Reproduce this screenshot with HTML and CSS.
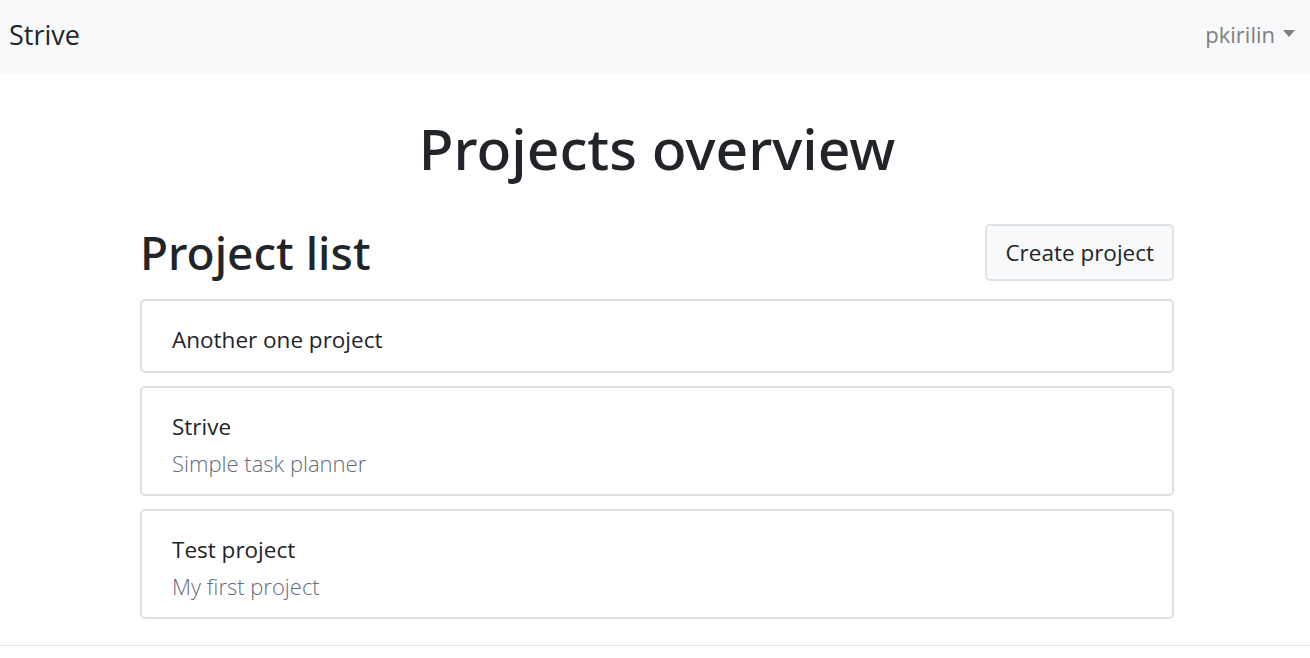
FILE: index.html
```html
<!DOCTYPE html>
<html lang="en">
<head>
<meta charset="utf-8">
<title>Strive</title>
<link rel="stylesheet" href="styles.css">
</head>
<body>
<nav class="navbar">
  <a class="brand" href="#">Strive</a>
  <div class="user">pkirilin<span class="caret"></span></div>
</nav>
<main class="container">
  <h1 class="page-title">Projects overview</h1>
  <div class="list-header">
    <h2 class="list-title">Project list</h2>
    <button class="btn">Create project</button>
  </div>
  <div class="cards">
    <div class="card"><div class="card-title">Another one project</div></div>
    <div class="card"><div class="card-title">Strive</div><div class="card-sub">Simple task planner</div></div>
    <div class="card"><div class="card-title">Test project</div><div class="card-sub">My first project</div></div>
  </div>
</main>
<footer class="footer"></footer>
</body>
</html>
```

FILE: styles.css
```css
* { box-sizing: border-box; }
html, body { margin: 0; padding: 0; }
body {
  font-family: "Open Sans", "Noto Sans", sans-serif;
  color: #212529;
  background: #fff;
}
.navbar {
  height: 74px;
  background: #f8f9fa;
  display: flex;
  align-items: center;
  justify-content: space-between;
  padding: 0 15px 6px 9px;
}
.brand {
  font-size: 27px;
  color: #212529;
  text-decoration: none;
  line-height: 1;
}
.user {
  font-size: 22px;
  color: #7e7f80;
  display: flex;
  align-items: center;
}
.caret {
  display: inline-block;
  margin-left: 8px;
  width: 0;
  height: 0;
  border-left: 6.5px solid transparent;
  border-right: 6.5px solid transparent;
  border-top: 7px solid #7e7f80;
  margin-top: -2px;
}
.container {
  width: 1034px;
  margin-left: calc(50% - 515px);
}
.page-title {
  margin: 0;
  padding-top: 40px;
  text-align: center;
  font-family: "Noto Sans", "Open Sans", sans-serif;
  font-size: 57px;
  font-weight: 500;
  line-height: 1.2;
}
.list-header {
  display: flex;
  justify-content: space-between;
  align-items: center;
  margin-top: 42px;
  margin-bottom: 18px;
}
.list-title {
  margin: 0;
  font-family: "Noto Sans", "Open Sans", sans-serif;
  font-size: 46px;
  font-weight: 500;
  line-height: 1.2;
}
.btn {
  font-family: inherit;
  font-size: 22.5px;
  color: #212529;
  background: #f8f9fa;
  border: 2px solid #dfe2e6;
  border-radius: 5px;
  height: 57px;
  padding: 0 18px;
}
.cards {
  display: flex;
  flex-direction: column;
  gap: 13px;
}
.card {
  border: 2px solid #dfdfdf;
  border-radius: 5px;
  padding: 26px 30px 18px;
}
.card-title {
  font-size: 22.5px;
  line-height: 26px;
}
.card-sub {
  font-size: 22px;
  line-height: 26px;
  margin-top: 10px;
  color: #656b7c;
  font-weight: 300;
}
.footer {
  margin-top: 26px;
  border-top: 1px solid #e5e5e5;
}
```
